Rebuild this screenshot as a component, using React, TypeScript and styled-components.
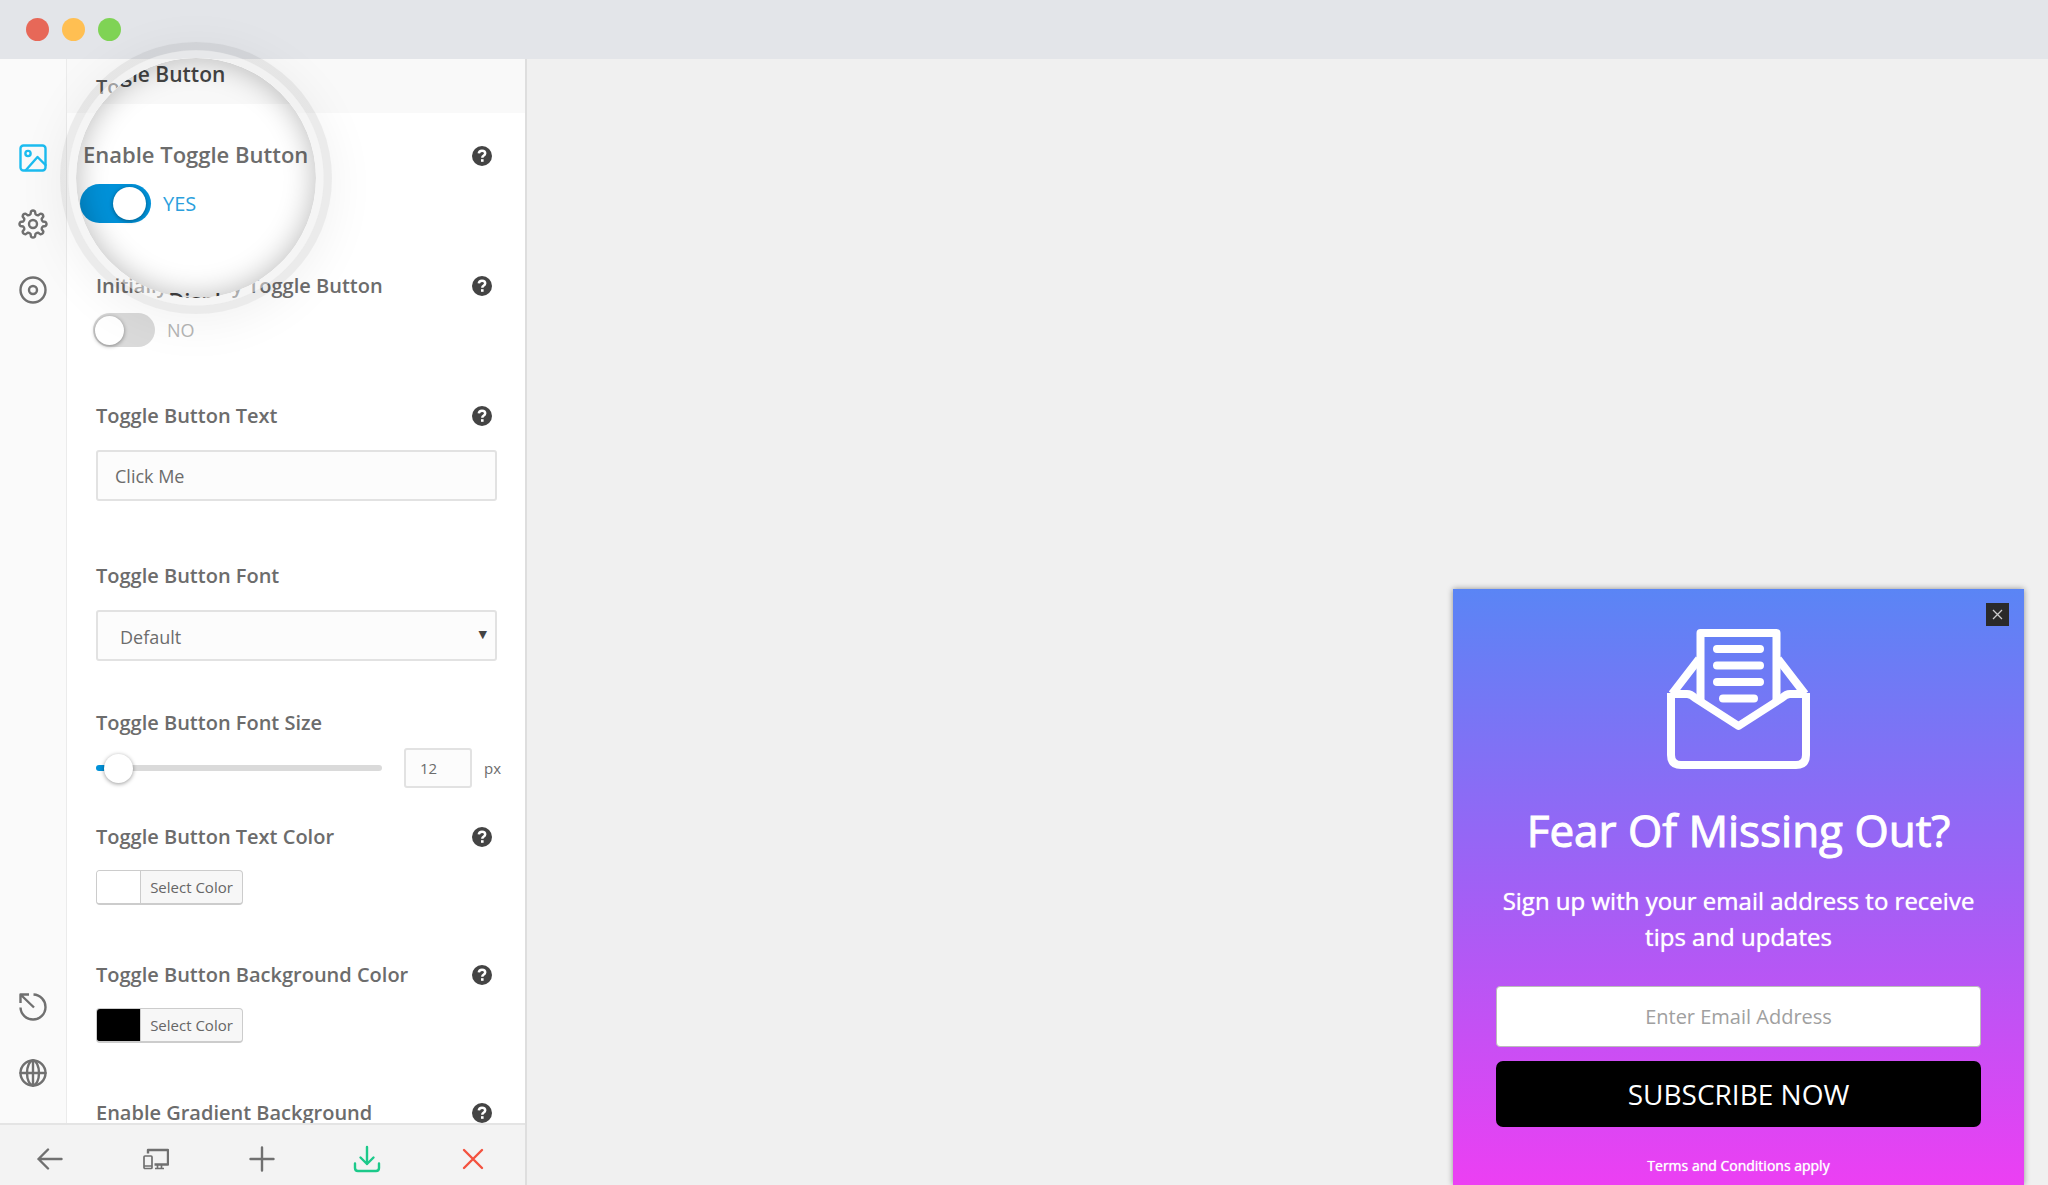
import React, { useState } from "react";
import styled, { createGlobalStyle } from "styled-components";

const GlobalStyle = createGlobalStyle`
  *, *::before, *::after { box-sizing: border-box; }
  body { margin: 0; background: #f0f0f0; }
  body, button, input, select { font-family: "Open Sans", "Noto Sans", sans-serif; }
  button { cursor: pointer; }
`;

const Page = styled.div`
  display: flex;
  flex-direction: column;
  height: 100vh;
  overflow: hidden;
`;

const TitleBar = styled.header`
  display: flex;
  flex: none;
  align-items: center;
  gap: 13px;
  height: 59px;
  padding-left: 26px;
  background: #e3e5e9;
`;

const Dot = styled.span<{ $color: string }>`
  width: 23px;
  height: 23px;
  border-radius: 50%;
  background: ${(p) => p.$color};
`;

const Workspace = styled.div`
  display: flex;
  flex: 1;
  min-height: 0;
`;

const Sidebar = styled.aside`
  position: relative;
  display: flex;
  flex-direction: column;
  flex: none;
  width: 527px;
  border-right: 2px solid #dedede;
  background: #fff;
`;

const SidebarMain = styled.div`
  display: flex;
  flex: 1;
  min-height: 0;
`;

const Rail = styled.nav`
  display: flex;
  flex: none;
  flex-direction: column;
  justify-content: space-between;
  width: 67px;
  padding: 81px 1px 32px 0;
  border-right: 1px solid #ebebeb;
  background: #fafafa;
`;

const RailGroup = styled.div`
  display: flex;
  flex-direction: column;
  align-items: center;
  gap: 30px;
`;

const IconButton = styled.button<{ $color?: string }>`
  display: flex;
  align-items: center;
  justify-content: center;
  width: 36px;
  height: 36px;
  padding: 0;
  border: 0;
  background: none;
  color: ${(p) => p.$color ?? "#707070"};
`;

const Settings = styled.div`
  flex: 1;
  min-width: 0;
  overflow: hidden;
`;

const SectionHeader = styled.h2`
  display: flex;
  align-items: center;
  height: 54px;
  margin: 0;
  padding-left: 29px;
  background: #f9f9f9;
  color: #555;
  font-size: 20px;
  font-weight: 600;
`;

const Field = styled.div<{ $height: number }>`
  height: ${(p) => p.$height}px;
  padding: 0 28px 0 29px;
`;

const FieldHead = styled.div`
  display: flex;
  align-items: center;
  justify-content: space-between;
  height: 28px;
  padding-right: 5px;
`;

const Label = styled.label`
  color: #6c6c6c;
  font-size: 20px;
  font-weight: 600;
  line-height: 28px;
  white-space: nowrap;
`;

const HelpButton = styled.button`
  display: flex;
  padding: 0;
  margin-left: auto;
  border: 0;
  background: none;
`;

const ToggleRow = styled.label<{ $on: boolean; $large?: boolean }>`
  display: flex;
  align-items: center;
  gap: 12px;
  width: max-content;
  color: ${(p) => (p.$on ? "#2b9fdd" : "#b5b5b5")};
  font-size: ${(p) => (p.$large ? 20 : 18)}px;
`;

const FieldToggle = styled.div`
  margin: 13px 0 0 -3px;
`;

const Switch = styled.input<{ $large?: boolean }>`
  appearance: none;
  display: flex;
  align-items: center;
  flex: none;
  width: ${(p) => (p.$large ? 71 : 62)}px;
  height: ${(p) => (p.$large ? 39 : 34)}px;
  margin: 0;
  padding: ${(p) => (p.$large ? "3px 5px 3px 3px" : "2px")};
  border-radius: 20px;
  background: #dadada;
  cursor: pointer;

  &::before {
    content: "";
    width: ${(p) => (p.$large ? 33 : 29)}px;
    height: ${(p) => (p.$large ? 33 : 29)}px;
    border-radius: 50%;
    background: #fff;
    box-shadow: 0 1px 4px rgba(0, 0, 0, 0.4);
  }

  &:checked {
    justify-content: flex-end;
    background: #0091d8;
  }
`;

const TextInput = styled.input`
  display: block;
  width: 100%;
  height: 51px;
  margin-top: 20px;
  padding: 0 17px;
  border: 2px solid #e2e2e2;
  border-radius: 3px;
  background: #fcfcfc;
  color: #6c6c6c;
  font-size: 18px;
`;

const SelectWrap = styled.div`
  position: relative;
  margin-top: 20px;

  &::after {
    content: "▼";
    position: absolute;
    top: 18px;
    right: 10px;
    color: #444;
    font: 11px "DejaVu Sans", sans-serif;
    pointer-events: none;
  }
`;

const Select = styled.select`
  appearance: none;
  display: block;
  width: 100%;
  height: 51px;
  padding: 2px 22px 0;
  border: 2px solid #e2e2e2;
  border-radius: 3px;
  background: #fcfcfc;
  color: #6c6c6c;
  font-size: 18px;
`;

const SliderRow = styled.div`
  display: flex;
  align-items: center;
  height: 40px;
  margin-top: 11px;
`;

const Slider = styled.input<{ $fill: number }>`
  appearance: none;
  flex: none;
  width: 286px;
  height: 6px;
  margin: 0 22px 0 0;
  border-radius: 3px;
  background: linear-gradient(to right, #0091d8 ${(p) => p.$fill}%, #dadada ${(p) => p.$fill}%);

  &::-webkit-slider-thumb {
    appearance: none;
    width: 29px;
    height: 29px;
    border-radius: 50%;
    background: #fff;
    box-shadow: 0 1px 4px rgba(0, 0, 0, 0.4);
  }
`;

const NumberInput = styled.input`
  width: 68px;
  height: 40px;
  padding: 0 14px;
  border: 2px solid #e2e2e2;
  border-radius: 3px;
  background: #fcfcfc;
  color: #6c6c6c;
  font-size: 15px;
`;

const Unit = styled.span`
  margin-left: 12px;
  color: #6c6c6c;
  font-size: 15px;
`;

const ColorButton = styled.button`
  display: flex;
  width: 147px;
  height: 35px;
  margin-top: 19px;
  padding: 0;
  overflow: hidden;
  border: 1px solid #ccc;
  border-bottom-width: 2px;
  border-radius: 4px;
  background: #f7f7f7;
  color: #666;
  font-size: 15px;
  line-height: 32px;
`;

const Swatch = styled.span<{ $color: string }>`
  width: 44px;
  height: 32px;
  border-right: 1px solid #ccc;
  background: ${(p) => p.$color};
`;

const SwatchText = styled.span`
  flex: 1;
`;

const Footer = styled.footer`
  display: flex;
  flex: none;
  align-items: center;
  justify-content: space-between;
  height: 62px;
  padding: 8px 34px 0 32px;
  border-top: 2px solid #e4e4e4;
  background: #f3f3f3;
`;

/* Magnifying lens laid over the sidebar */
const Lens = styled.div`
  position: absolute;
  top: -17px;
  left: 60px;
  z-index: 1;
  width: 272px;
  height: 272px;
  padding: 8px;
  border-radius: 50%;
  background: radial-gradient(closest-side, transparent 127px, rgba(0, 0, 0, 0.08) 128px);
  box-shadow: 0 8px 50px rgba(0, 0, 0, 0.06);
`;

const LensRim = styled.div`
  height: 100%;
  padding: 8px;
  border-radius: 50%;
  background: rgba(236, 236, 236, 0.5);
`;

const LensGlass = styled.div`
  position: relative;
  height: 100%;
  overflow: hidden;
  border-radius: 50%;
  background: #fff;

  &::after {
    content: "";
    position: absolute;
    inset: 0;
    border-radius: 50%;
    box-shadow: inset 0 0 30px rgba(0, 0, 0, 0.28);
    pointer-events: none;
  }
`;

const LensHeader = styled.div`
  height: 46px;
  padding-left: 8px;
  background: #f8f8f8;
  color: #444;
  font-size: 21px;
  font-weight: 600;
  line-height: 32px;
  white-space: nowrap;
`;

const LensLabel = styled.label`
  display: block;
  padding: 34px 0 0 7px;
  color: #6c6c6c;
  font-size: 22px;
  font-weight: 600;
  line-height: 32px;
  white-space: nowrap;
`;

const LensToggle = styled.div`
  margin: 14px 0 0 4px;
`;

const LensNext = styled.div`
  margin-top: 61px;
  padding-left: 8px;
  color: #444;
  font-size: 22px;
  font-weight: 600;
  line-height: 32px;
  white-space: nowrap;
`;

const Canvas = styled.main`
  display: flex;
  flex: 1;
  align-items: flex-end;
  justify-content: flex-end;
  padding-right: 24px;
`;

const Popup = styled.section`
  position: relative;
  display: flex;
  flex-direction: column;
  align-items: center;
  width: 571px;
  height: 596px;
  padding: 39px 43px 0;
  background: linear-gradient(#5a85f5, #a160f5 50%, #ec3ff3);
  box-shadow: 0 0 6px rgba(0, 0, 0, 0.4);
  color: #fff;
  text-align: center;
`;

const CloseButton = styled.button`
  position: absolute;
  top: 14px;
  right: 15px;
  display: flex;
  align-items: center;
  justify-content: center;
  width: 23px;
  height: 23px;
  padding: 0;
  border: 0;
  background: #2a2a2a;
`;

const Title = styled.h1`
  margin: 28px 0 0;
  font-size: 44px;
  font-weight: 400;
  line-height: 64px;
  white-space: nowrap;
  -webkit-text-stroke: 1px #fff;
`;

const Lead = styled.p`
  margin: 21px 0 0;
  font-size: 24px;
  line-height: 36px;
  text-shadow: 0 0 1px #fff;
`;

const EmailInput = styled.input`
  width: 100%;
  height: 61px;
  margin-top: 31px;
  border: 1px solid #bbb;
  border-radius: 4px;
  background: #fff;
  font-size: 20px;
  text-align: center;

  &::placeholder { color: #a0a0a0; }
`;

const Subscribe = styled.button`
  width: 100%;
  height: 66px;
  margin-top: 14px;
  border: 0;
  border-radius: 7px;
  background: #000;
  color: #fff;
  font-size: 28px;
`;

const Terms = styled.p`
  margin: 27px 0 0;
  font-size: 14px;
  line-height: 24px;
  text-shadow: 0 0 1px #fff;
`;

const Help = () => (
  <HelpButton type="button" aria-label="Help">
    <svg width="20" height="20" viewBox="0 0 20 20" fill="none">
      <circle cx="10" cy="10" r="10" fill="#444" />
      <path d="M6.8 7.4C7 5.5 8.3 4.7 10 4.7c1.8 0 3.2 1 3.2 2.6 0 1.300-.8 1.900-1.700 2.500-.9.6-1.200 1-1.200 2" stroke="#fff" strokeWidth="2.500" />
      <rect x="9" y="13.200" width="2.600" height="2.600" fill="#fff" />
    </svg>
  </HelpButton>
);

const stroke = {
  fill: "none",
  stroke: "currentColor",
  strokeWidth: 2.4,
  strokeLinecap: "round" as const,
  strokeLinejoin: "round" as const,
};

const ImageIcon = () => (
  <svg width="28" height="28" viewBox="0 0 28 28" {...stroke}>
    <rect x="1.500" y="1.500" width="25" height="25" rx="3" />
    <circle cx="9" cy="9.500" r="2.600" />
    <path d="M7 26 18.500 13 26.500 21" />
  </svg>
);

const gearPath = (() => {
  const points: string[] = [];
  const at = (r: number, deg: number) => {
    const a = (deg * Math.PI) / 180;
    return `${(15 + r * Math.sin(a)).toFixed(2)} ${(15 - r * Math.cos(a)).toFixed(2)}`;
  };
  for (let i = 0; i < 8; i++) {
    const c = i * 45;
    points.push(
      `${i === 0 ? "M" : "L"}${at(10.2, c - 14)}`,
      `L${at(12.8, c - 9)}`,
      `Q${at(14.4, c)} ${at(12.8, c + 9)}`,
      `L${at(10.2, c + 14)}`,
      `Q${at(9.2, c + 22.5)} ${at(10.2, c + 31)}`
    );
  }
  return points.join(" ") + "Z";
})();

const GearIcon = () => (
  <svg width="30" height="30" viewBox="0 0 30 30" {...stroke}>
    <path d={gearPath} />
    <circle cx="15" cy="15" r="4" />
  </svg>
);

const TargetIcon = () => (
  <svg width="28" height="28" viewBox="0 0 28 28" {...stroke}>
    <circle cx="14" cy="14" r="12.500" />
    <circle cx="14" cy="14" r="4" />
  </svg>
);

const RevertIcon = () => (
  <svg width="28" height="28" viewBox="0 0 28 28" {...stroke} strokeLinecap="butt">
    <path d="M1.500 10V1.500H10M2 2l13 12.500M14.500 1.500A12.500 12.500 0 1 1 1.500 14.500" />
  </svg>
);

const GlobeIcon = () => (
  <svg width="28" height="28" viewBox="0 0 28 28" {...stroke}>
    <circle cx="14" cy="14" r="12.500" />
    <ellipse cx="14" cy="14" rx="6" ry="12.500" />
    <path d="M1.500 14h25M14 1.500v25" />
  </svg>
);

const BackIcon = () => (
  <svg width="26" height="22" viewBox="0 0 26 22" {...stroke}>
    <path d="M24.500 11H1.500M11 1.500 1.500 11l9.500 9.500" />
  </svg>
);

const DevicesIcon = () => (
  <svg width="26" height="22" viewBox="0 0 26 22" {...stroke} strokeLinecap="butt">
    <path d="M5 5.500V2h20v14.500H11.500" />
    <rect x="1" y="8" width="8" height="12.500" rx="1" strokeWidth="1.700" />
    <path d="M1 18h8M14.500 17v3M18.500 17v3M12 20.500h9" strokeWidth="1.700" />
  </svg>
);

const PlusIcon = () => (
  <svg width="26" height="26" viewBox="0 0 26 26" {...stroke}>
    <path d="M13 1.500v23M1.500 13h23" />
  </svg>
);

const SaveIcon = () => (
  <svg width="28" height="28" viewBox="0 0 28 28" {...stroke}>
    <path d="M14 2v17M7.500 12.500l6.500 6.500 6.500-6.500M2 18.500V23q0 3 3 3h18q3 0 3-3v-4.500" />
  </svg>
);

const CancelIcon = () => (
  <svg width="22" height="22" viewBox="0 0 22 22" {...stroke}>
    <path d="M2 2l18 18M20 2 2 20" />
  </svg>
);

const EnvelopeIcon = () => (
  <svg width="143" height="142" viewBox="0 0 143 142" fill="none" stroke="#fff" strokeWidth="8">
    <path d="M4 65v62q0 10 10 10h115q10 0 10-10V65" />
    <path d="M4 66h16q4 0 8 4L71.500 98 115 70q4-4 8-4h16" strokeLinejoin="round" />
    <path d="M33.500 74V5h76v69" strokeLinejoin="round" />
    <path d="M32 31 5 66M111 31l27 35" />
    <path d="M50 21h43M50 37.500h43M50 54h43M56 70.500h31" strokeLinecap="round" />
  </svg>
);

export default function App() {
  const [enabled, setEnabled] = useState(true);
  const [initial, setInitial] = useState(false);
  const [size, setSize] = useState(12);

  return (
    <Page>
      <GlobalStyle />
      <TitleBar>
        <Dot $color="#e76858" />
        <Dot $color="#ffbf52" />
        <Dot $color="#7fd355" />
      </TitleBar>
      <Workspace>
        <Sidebar>
          <SidebarMain>
            <Rail>
              <RailGroup>
                <IconButton type="button" aria-label="Design" $color="#1cbcf0"><ImageIcon /></IconButton>
                <IconButton type="button" aria-label="Settings"><GearIcon /></IconButton>
                <IconButton type="button" aria-label="Targeting"><TargetIcon /></IconButton>
              </RailGroup>
              <RailGroup>
                <IconButton type="button" aria-label="Revert"><RevertIcon /></IconButton>
                <IconButton type="button" aria-label="Language"><GlobeIcon /></IconButton>
              </RailGroup>
            </Rail>
            <Settings>
              <SectionHeader>Toggle Button</SectionHeader>
              <Field $height={29} />
              <Field $height={130}>
                <FieldHead><Help /></FieldHead>
              </Field>
              <Field $height={130}>
                <FieldHead>
                  <Label htmlFor="initial">Initially Display Toggle Button</Label>
                  <Help />
                </FieldHead>
                <FieldToggle>
                  <ToggleRow $on={initial}>
                    <Switch id="initial" type="checkbox" checked={initial} onChange={(e) => setInitial(e.target.checked)} />
                    {initial ? "YES" : "NO"}
                  </ToggleRow>
                </FieldToggle>
              </Field>
              <Field $height={160}>
                <FieldHead>
                  <Label htmlFor="text">Toggle Button Text</Label>
                  <Help />
                </FieldHead>
                <TextInput id="text" defaultValue="Click Me" />
              </Field>
              <Field $height={147}>
                <FieldHead><Label htmlFor="font">Toggle Button Font</Label></FieldHead>
                <SelectWrap>
                  <Select id="font"><option>Default</option></Select>
                </SelectWrap>
              </Field>
              <Field $height={114}>
                <FieldHead><Label htmlFor="size">Toggle Button Font Size</Label></FieldHead>
                <SliderRow>
                  <Slider id="size" type="range" min={9} max={100} value={size} $fill={6} onChange={(e) => setSize(Number(e.target.value))} />
                  <NumberInput aria-label="Font size in pixels" value={size} onChange={(e) => setSize(Number(e.target.value) || 0)} />
                  <Unit>px</Unit>
                </SliderRow>
              </Field>
              <Field $height={138}>
                <FieldHead>
                  <Label htmlFor="color">Toggle Button Text Color</Label>
                  <Help />
                </FieldHead>
                <ColorButton id="color" type="button"><Swatch $color="#fff" /><SwatchText>Select Color</SwatchText></ColorButton>
              </Field>
              <Field $height={138}>
                <FieldHead>
                  <Label htmlFor="background">Toggle Button Background Color</Label>
                  <Help />
                </FieldHead>
                <ColorButton id="background" type="button"><Swatch $color="#000" /><SwatchText>Select Color</SwatchText></ColorButton>
              </Field>
              <Field $height={28}>
                <FieldHead>
                  <Label as="span">Enable Gradient Background</Label>
                  <Help />
                </FieldHead>
              </Field>
            </Settings>
          </SidebarMain>
          <Footer>
            <IconButton type="button" aria-label="Back"><BackIcon /></IconButton>
            <IconButton type="button" aria-label="Responsive preview"><DevicesIcon /></IconButton>
            <IconButton type="button" aria-label="Add"><PlusIcon /></IconButton>
            <IconButton type="button" aria-label="Save" $color="#1cc98a"><SaveIcon /></IconButton>
            <IconButton type="button" aria-label="Close" $color="#f3523f"><CancelIcon /></IconButton>
          </Footer>
          <Lens>
            <LensRim>
              <LensGlass>
                <LensHeader aria-hidden="true">Toggle Button</LensHeader>
                <LensLabel htmlFor="enable">Enable Toggle Button</LensLabel>
                <LensToggle>
                  <ToggleRow $on={enabled} $large>
                    <Switch id="enable" type="checkbox" $large checked={enabled} onChange={(e) => setEnabled(e.target.checked)} />
                    {enabled ? "YES" : "NO"}
                  </ToggleRow>
                </LensToggle>
                <LensNext aria-hidden="true">Initially Display Toggle Button</LensNext>
              </LensGlass>
            </LensRim>
          </Lens>
        </Sidebar>
        <Canvas>
          <Popup>
            <CloseButton type="button" aria-label="Close popup">
              <svg width="11" height="11" viewBox="0 0 11 11" stroke="#ccc" strokeWidth="1.300">
                <path d="M1 1l9 9M10 1 1 10" />
              </svg>
            </CloseButton>
            <EnvelopeIcon />
            <Title>Fear Of Missing Out?</Title>
            <Lead>Sign up with your email address to receive tips and updates</Lead>
            <EmailInput type="email" placeholder="Enter Email Address" aria-label="Email address" />
            <Subscribe type="button">SUBSCRIBE NOW</Subscribe>
            <Terms>Terms and Conditions apply</Terms>
          </Popup>
        </Canvas>
      </Workspace>
    </Page>
  );
}
